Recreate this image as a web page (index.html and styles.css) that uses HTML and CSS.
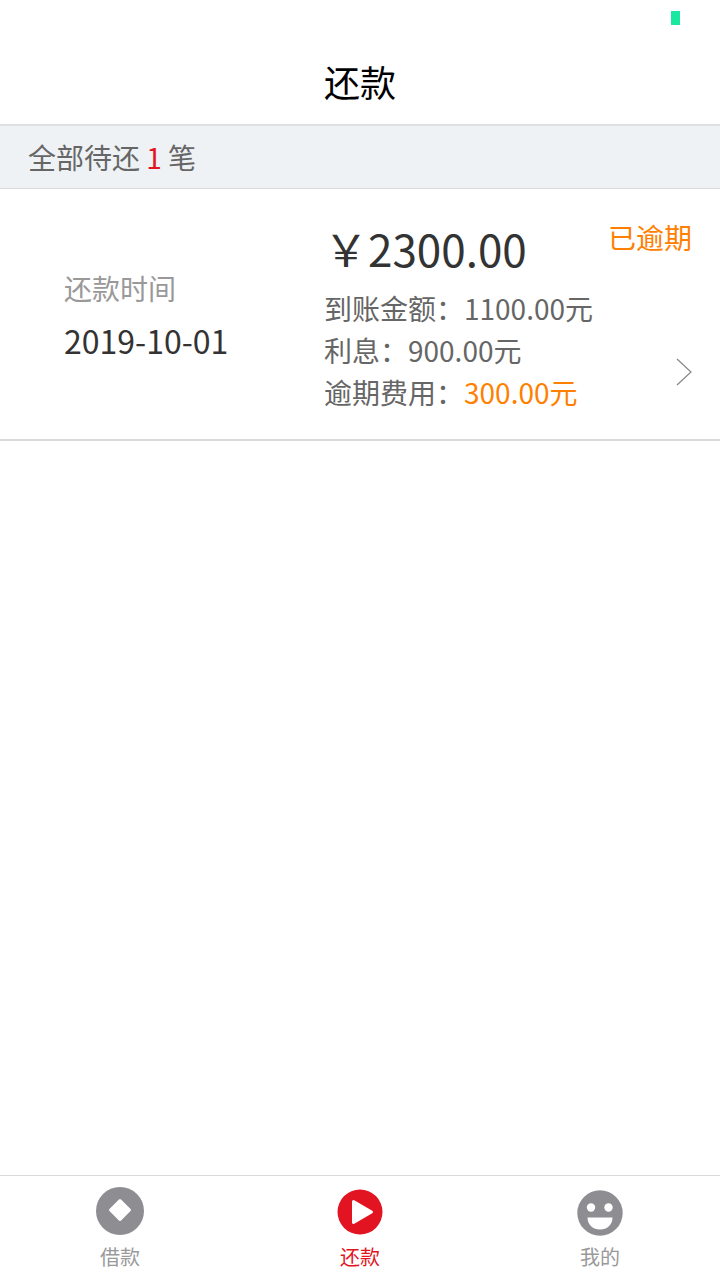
FILE: index.html
```
<!DOCTYPE html>
<html lang="zh-CN">
<head>
  <meta charset="UTF-8" />
  <meta name="viewport" content="width=device-width, initial-scale=1.0"/>
  <title>还款</title>
  <link rel="stylesheet" href="styles.css">
</head>
<body>

  <div class="status-bar"><span class="battery"></span></div>

  <header class="header">
    <h1 class="title">还款</h1>
  </header>

  <main class="content">
    <p class="summary">全部待还 <span class="count">1</span> 笔</p>

    <a class="bill" href="#detail">
      <div class="bill-date">
        <div class="label">还款时间</div>
        <div class="date">2019-10-01</div>
      </div>
      <div class="bill-info">
        <div class="amount">￥2300.00</div>
        <div class="row">到账金额：1100.00元</div>
        <div class="row">利息：900.00元</div>
        <div class="row">逾期费用：<span class="overdue">300.00元</span></div>
      </div>
      <div class="bill-side">
        <span class="overdue">已逾期</span>
        <svg class="arrow" viewBox="0 0 16 28"><path d="M1 1 L15 14 L1 27"/></svg>
      </div>
    </a>
  </main>

  <nav class="tabs">
    <a class="tab" href="#loan">
      <svg class="tab-icon" viewBox="0 0 48 48">
        <circle cx="24" cy="24" r="24"/>
        <path class="cut" d="M24 13.500 L33.500 23 L24 32.500 L14.500 23 Z"/>
      </svg>
      <span>借款</span>
    </a>
    <a class="tab active" href="#repay">
      <svg class="tab-icon" viewBox="0 0 48 48">
        <circle cx="24" cy="25" r="22.500"/>
        <path class="cut" d="M17.500 14.500 L35.500 25 L17.500 35.500 Z"/>
      </svg>
      <span>还款</span>
    </a>
    <a class="tab" href="#mine">
      <svg class="tab-icon" viewBox="0 0 48 48">
        <circle cx="24" cy="26" r="22.700"/>
        <circle class="eye" cx="15" cy="20.500" r="4.200"/>
        <circle class="eye" cx="32.500" cy="20.500" r="4.200"/>
        <path class="eye" d="M11.500 30.500 H36.500 C36.500 38 31 42.500 24 42.500 C17 42.500 11.500 38 11.500 30.500 Z"/>
      </svg>
      <span>我的</span>
    </a>
  </nav>

</body>
</html>
```
FILE: styles.css
```
:root {
  --text-color: #333;
  --gray: #666;
  --light-gray: #999;
  --icon-gray: #8e8d92;
  --line: #d9d9d9;
  --red: #e31422;
  --orange: #ff8000;
}

* {
  box-sizing: border-box;
}

body {
  margin: 0;
  min-height: 100vh;
  display: flex;
  flex-direction: column;
  background: #fff;
  color: var(--gray);
  font-family: 'Noto Sans CJK SC', sans-serif;
  font-weight: 400;
  font-size: 28px;
  line-height: 42px;
}

a {
  color: inherit;
  text-decoration: none;
}

/* Top */
.status-bar {
  display: flex;
  justify-content: flex-end;
  height: 40px;
  padding: 11px 40px 0;
}

.battery {
  width: 9px;
  height: 14px;
  background: #19e8a0;
}

.header {
  border-bottom: 2px solid #e0e0e0;
  text-align: center;
}

.title {
  margin: 0;
  padding-bottom: 2px;
  color: #000;
  font-size: 36px;
  font-weight: 400;
  line-height: 82px;
}

/* List */
.content {
  flex: 1;
}

.summary {
  margin: 0;
  padding: 10px 28px;
  background: #eef2f5;
  border-bottom: 1px solid var(--line);
}

.count {
  color: var(--red);
}

.bill {
  display: flex;
  border-bottom: 2px solid var(--line);
}

.bill-date {
  flex: 0 0 45%;
  padding-left: 64px;
  align-self: center;
  line-height: 52px;
}

.label {
  color: var(--light-gray);
}

.date {
  color: var(--text-color);
  font-size: 32px;
}

.bill-info {
  flex: 1;
  padding: 20px 0 26px;
}

.amount {
  color: var(--text-color);
  font-size: 44px;
  line-height: 78px;
}

.overdue {
  color: var(--orange);
}

.bill-side {
  display: flex;
  flex-direction: column;
  justify-content: space-between;
  align-items: flex-end;
  padding: 27px 28px 53px 0;
}

.arrow {
  width: 16px;
  height: 28px;
  fill: none;
  stroke: #888;
  stroke-width: 1.2;
}

/* Bottom tabs */
.tabs {
  display: flex;
  border-top: 1px solid var(--line);
}

.tab {
  flex: 1;
  display: flex;
  flex-direction: column;
  align-items: center;
  gap: 10px;
  padding: 11px 0;
  color: var(--light-gray);
  font-size: 20px;
  line-height: 24px;
}

.tab.active {
  color: var(--red);
}

.tab-icon {
  width: 48px;
  height: 48px;
  fill: var(--icon-gray);
  overflow: visible;
}

.active .tab-icon {
  fill: var(--red);
}

.cut {
  fill: #fff;
  stroke: #fff;
  stroke-width: 3;
  stroke-linejoin: round;
}

.eye {
  fill: #fff;
}
```
